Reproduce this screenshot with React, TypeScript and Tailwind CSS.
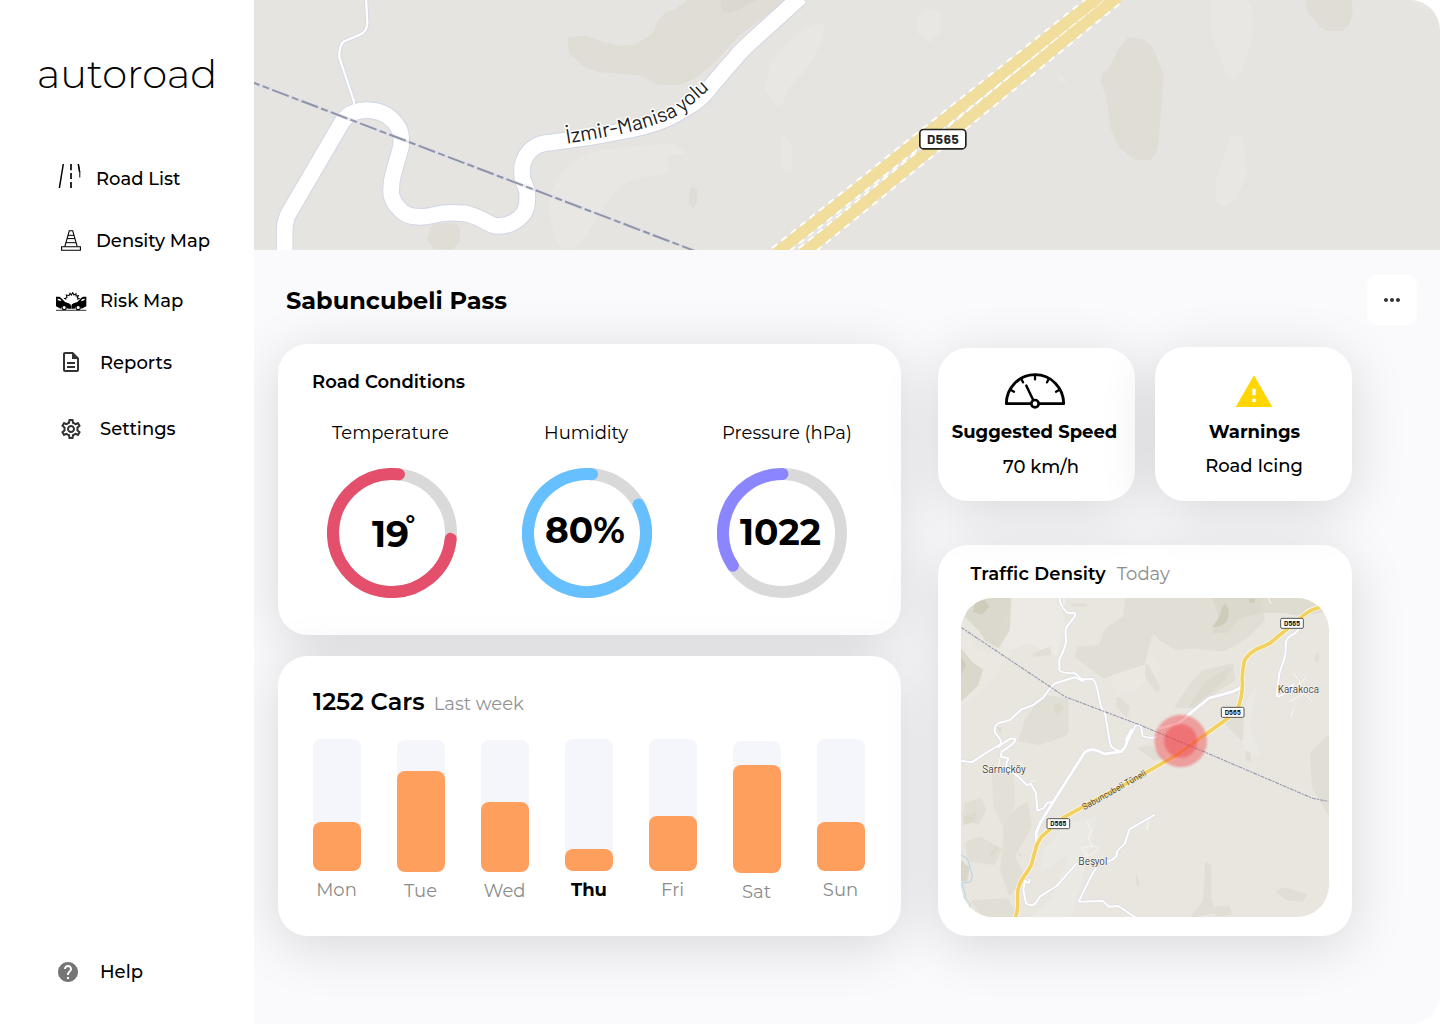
import React from 'react';
import { MdHelp, MdMoreHoriz, MdOutlineDescription, MdOutlineSettings, MdWarning } from 'react-icons/md';

const CARD = 'bg-white rounded-[30px] shadow-[0_10px_56px_rgba(0,0,0,0.14)]';

function RoadIcon() {
  return (
    <svg width="24" height="26" viewBox="0 0 24 26" fill="none" stroke="#000" strokeWidth="1.5">
      <path d="M6.300 1L2.400 25" />
      <path d="M14 1v6.200M14 10v6M14 19v6" stroke="#222" strokeWidth="1.900" />
      <path d="M21.300 1l1.500 8V14.500" strokeWidth="1" />
      <path d="M21.300 1l1.300 8" strokeWidth="1.500" />
    </svg>
  );
}

function ConeIcon() {
  return (
    <svg width="20" height="21" viewBox="0 0 20 21" fill="none" stroke="#000" strokeWidth="1.1">
      <path d="M.6 16.700h18.800v3.500H.6z" />
      <path d="M3.800 16.600L8.300.8h3.400l4.500 15.800" />
      <path d="M7 5.300h6M6.200 8.600h7.600M5 12.700h10" strokeWidth="1" />
    </svg>
  );
}

function CrashIcon() {
  return (
    <svg width="31" height="19" viewBox="0 0 93 57" fill="#000">
      <path d="M0 14L10 14.500Q15 16 19 22L27 30L38 34Q45 36 45 42V50H35A11 11 0 0 0 14 50L0 43Z" />
      <path d="M91 14L81 14.500Q76 16 72 22L64 30L53 34Q46 36 46 42V50H56A11 11 0 0 1 77 50L91 43Z" />
      <path d="M4 20L12 21L17 28L6 25Z" fill="#fff" />
      <path d="M87 20L79 21L74 28L85 25Z" fill="#fff" />
      <circle cx="24.500" cy="46.500" r="6.500" fill="#fff" stroke="#000" strokeWidth="3.500" />
      <circle cx="66.500" cy="46.500" r="6.500" fill="#fff" stroke="#000" strokeWidth="3.500" />
      <path d="M0 53.500h91v2.400H0z" />
      <path
        d="M31 22L26 19L33 17L31 9L39 11L42 4L46 9L50 2L54 9L60 5L60 12L67 11L64 17L69 20L63 22"
        fill="none"
        stroke="#000"
        strokeWidth="3.200"
      />
    </svg>
  );
}

function Logo() {
  return <div className="mt-[49px] pl-[37px] text-[40px] font-light leading-[49px]">autoroad</div>;
}

function NavItem({ icon, label, className, labelClass }: { icon: React.ReactNode; label: string; className: string; labelClass: string }) {
  return (
    <a className={`flex h-[22px] items-center pl-14 text-lg font-medium leading-[22px] ${className}`}>
      <span className="flex w-[31px] shrink-0 items-center">{icon}</span>
      <span className={labelClass}>{label}</span>
    </a>
  );
}

function Sidebar() {
  return (
    <aside className="z-10 flex h-full w-[254px] shrink-0 flex-col bg-white">
      <Logo />
      <nav className="flex flex-col">
        <NavItem className="mt-[70px]" labelClass="ml-[9px]" label="Road List" icon={<span className="-mt-1.5 ml-px"><RoadIcon /></span>} />
        <NavItem className="mt-10" labelClass="ml-[9px]" label="Density Map" icon={<span className="-mt-0.5 ml-[5px]"><ConeIcon /></span>} />
        <NavItem className="mt-[38px]" labelClass="ml-[13px]" label="Risk Map" icon={<CrashIcon />} />
        <NavItem className="mt-10" labelClass="ml-[13px]" label="Reports" icon={<MdOutlineDescription className="-mt-0.5 ml-[3px]" size={24} color="#333" />} />
        <NavItem className="mt-11" labelClass="ml-[13px]" label="Settings" icon={<MdOutlineSettings className="ml-[3px]" size={24} color="#333" />} />
      </nav>
      <NavItem className="mb-[41px] mt-auto" labelClass="ml-[13px]" label="Help" icon={<MdHelp size={24} color="#757575" />} />
    </aside>
  );
}

function HeroMap() {
  const road =
    'M92 756V685Q94 655 110 630L265 365Q280 345 300 337Q325 328 348 331Q375 332 400 347Q422 362 434 385Q444 402 441 440L420 515Q409 550 412 585Q420 612 435 625Q455 650 490 650Q515 652 540 645Q580 635 630 640Q650 643 680 657L715 675Q745 683 775 668Q800 655 812 635Q823 610 819 575Q817 562 806 540Q802 515 806 492Q815 460 840 442Q855 430 895 427L1010 411L1130 389Q1220 370 1270 340L1318 311Q1350 290 1378 250L1460 155Q1490 125 1538 83L1640-10';
  return (
    <svg className="block h-[250px] w-full rounded-tr-[30px]" viewBox="0 0 3558 750" preserveAspectRatio="none">
      <rect width="3558" height="750" fill="#e5e4e0" />
      <g fill="#e0ddd6">
        <path d="M940 112L960 108H995L1060 128L1105 138L1145 133L1198 98L1210 65L1235 35L1265 27L1300 0H1600L1458 105L1380 190L1325 235L1278 254H1215L1150 226L1030 216L990 202L945 160Z" />
        <path d="M527 685L545 670H605L618 685V725L595 748H540L520 720Z" />
        <path d="M1308 565L1318 560L1330 567V605L1318 625L1303 610Z" />
        <g transform="translate(2358)">
          <path d="M265 112L310 118L340 145L371 225L358 400Q353 450 345 465L330 480H285L235 440L213 388L198 288L183 250L187 220L208 203L235 148Z" />
          <path d="M797 0H935L938 45L928 75L905 93H862L840 80L803 35Z" />
        </g>
      </g>
      <path d="M1400 0L1405 35L1420 39L1450 30L1508 0Z" fill="#dbd8d0" />
      <g fill="#e8e7e3">
        <path d="M885 600Q900 540 930 510Q980 460 1040 450L1260 429L1298 460L1238 470L1245 520L1200 527Q1130 535 1100 560Q1040 620 1020 670Q980 740 950 748Q920 750 910 735Q885 660 885 600Z" />
        <g transform="translate(1158)">
          <path d="M555 75L520 73L480 93L440 130L390 190L375 270L410 320L430 310Q440 270 455 255L500 210L545 130Z" />
          <path d="M830 50L860 25L900 35L902 95L865 130L832 100Z" />
          <path d="M432 403L458 440L455 505L440 517L425 500L422 440Z" />
        </g>
        <g transform="translate(2358)">
          <path d="M513 0H620L632 15L638 50L634 130L608 210L585 240L568 235L550 200L513 100Z" />
          <path d="M573 407L600 405L613 440L623 520L588 600L550 620L528 605V540Z" />
          <path d="M53 215L63 245L88 255Z" />
          <path d="M1110 0L1155 28H1200V0Z" />
        </g>
      </g>
      <g fill="none" strokeLinejoin="round">
        <path d="M336-5L340 70Q338 95 318 104L270 124Q255 135 256 172L300 305V335" stroke="#d3d5e6" strokeWidth="12" />
        <path d={road} stroke="#d3d5e6" strokeWidth="53" />
        <path d="M336-5L340 70Q338 95 318 104L270 124Q255 135 256 172L300 305V335" stroke="#fff" strokeWidth="7" />
        <path d={road} stroke="#fff" strokeWidth="47" />
        <path d="M-36 235L1328 755" stroke="#dcdeea" strokeWidth="10" opacity="0.6" />
        <path d="M-36 235L1328 755" stroke="#9094a8" strokeWidth="6" strokeDasharray="53 10 21 10" strokeDashoffset="-3" />
        <g stroke="#fff" strokeWidth="45" strokeDasharray="20 16">
          <path d="M1566 760L2536-10" />
          <path d="M1647 760L2592-10" />
        </g>
        <g stroke="#f1dd9c" strokeWidth="34">
          <path d="M1566 760L2536-10" />
          <path d="M1647 760L2592-10" />
        </g>
      </g>
      <path id="izmir" d="M938 431Q1020 418 1100 402Q1190 382 1256 354Q1285 340 1300 326L1440 200" fill="none" />
      <text className="font-['DIN_Pro',Barlow,Roboto,sans-serif]" fontSize="62" fill="#222" stroke="#fff" strokeWidth="9" paintOrder="stroke" strokeLinejoin="round" textLength="470" lengthAdjust="spacingAndGlyphs">
        <textPath href="#izmir">İzmir-Manisa yolu</textPath>
      </text>
      <rect x="1997.500" y="388.500" width="138" height="58" rx="11" fill="#fff" stroke="#222" strokeWidth="5" />
      <text x="2066.500" y="431" textAnchor="middle" className="font-['DIN_Pro',Barlow,Roboto,sans-serif] font-bold" fontSize="40" fill="#222" textLength="95">
        D565
      </text>
    </svg>
  );
}

function RouteBadge({ x, y }: { x: number; y: number }) {
  return (
    <g transform={`translate(${x} ${y})`}>
      <rect x="-34" y="-15" width="68" height="30" rx="4" fill="#fff" stroke="#555" strokeWidth="3" />
      <text y="7.500" textAnchor="middle" className="font-['DIN_Pro',Barlow,Roboto,sans-serif] font-bold" fontSize="21" fill="#222" textLength="48">
        D565
      </text>
    </g>
  );
}

const SMALL_ROADS = [
  'M388 170Q390 200 412 218L432 219Q440 222 430 235L409 262Q404 280 409 300Q404 330 388 358V390Q392 400 435 400L455 418L488 417Q498 425 505 462L513 500L525 520L532 560L540 610Q545 630 572 634',
  'M460 424L435 412L380 428Q365 435 340 472L310 495L275 508L240 540L205 550Q192 556 195 577L212 600V612L170 638L125 667L93 662',
  'M205 622Q240 590 255 597Q262 605 215 635L213 650L235 655L228 675L245 695L265 710L290 735L303 732L318 760L322 812L340 805L352 788L370 785',
  'M590 610Q600 590 615 560Q622 550 633 560L638 588Q650 595 680 592',
  'M1108 265L1095 280Q1072 290 1068 305L1066 345L1048 400L1040 465Q1042 475 1060 462L1090 435',
  'M673 825L650 838L598 868L585 910L560 935Q565 955 530 965',
  'M440 970L405 1010L380 1038L330 1070L315 1092Q300 1100 288 1090L280 1050L285 1022Q300 1035 298 1020',
  'M500 980L480 1015L446 1085L518 1083L537 1100L565 1098L620 1135',
];
const WIDE_ROADS = [
  'M320 905L318 880L330 850L370 785L462 640Q475 625 500 631L525 642L573 635Q592 620 590 597L605 570',
  'M690 565L745 550Q765 538 780 520L838 474L890 460Q925 450 935 440',
];
const YELLOW_ROAD =
  'M1170 202Q1140 207 1110 235L1020 310Q1000 320 985 325Q958 338 943 362Q936 395 937 420Q940 470 920 512L880 545L740 645L600 725L460 800L400 833L335 890Q320 910 316 930L304 975Q295 992 280 1012Q264 1035 263 1060V1100Q262 1120 255 1134';

function DensityMap() {
  return (
    <svg className="block h-[319px] w-[368px] rounded-[32px]" viewBox="93 174 1104 957">
      <filter id="soft">
        <feGaussianBlur stdDeviation="3" />
      </filter>
      <rect x="93" y="174" width="1104" height="957" fill="#e8e6df" />
      <g fill="#edeae5">
        <path d="M240 174H390L405 260L380 350L300 310L240 330L200 300Z" />
        <path d="M93 260L150 330L180 340L220 300L240 340L180 430L93 500Z" opacity="0.6" />
        <path d="M950 480L980 440L960 560L990 640L950 660L935 600Z" opacity="0.7" />
        <path d="M330 1000L420 940L360 1080L300 1131H420L450 1050L500 830L410 850L340 930Z" opacity="0.7" />
        <path d="M520 350L640 320L700 380L620 450L560 470Z" opacity="0.5" />
      </g>
      <g fill="#e1ded6" stroke="#e1ded6" strokeWidth="10" strokeLinejoin="round">
        <path d="M590 174H720L715 230L660 290L640 370L560 395L520 410L480 380L440 350L445 325L510 320L530 270L585 230Z" />
        <path d="M665 265L700 240L720 174H990L1000 240L950 290L880 330L790 320L740 325L690 295Z" />
        <path d="M340 470L410 480V580L330 610L270 600L290 540Z" />
        <path d="M650 375L685 440L680 450L650 410Z" />
        <path d="M565 475L595 500L590 525L565 500Z" />
        <path d="M820 395L905 375L910 420L860 450L800 500L740 500L780 440Z" />
        <path d="M110 790L150 780L165 810L140 850L100 830Z" />
        <path d="M190 680L245 700L250 790L225 860L195 800Z" opacity="0.7" />
        <path d="M225 860L250 820L290 790L300 860L250 950L280 1010L240 1060L215 990L225 900Z" />
        <path d="M110 910L150 895L210 930L190 970L120 960Z" />
        <path d="M130 1085L230 1080L260 1131H160Z" />
        <path d="M1145 640L1197 590V820L1150 740Z" />
        <path d="M1045 1055L1065 1047L1125 1065L1115 1080L1070 1076Z" />
        <path d="M830 970L840 980V1080L850 1115L790 1128L825 1080ZM858 1104L895 1104L900 1120L860 1124Z" />
        <path d="M885 545L935 535V595L910 570Z" />
      </g>
      <g fill="#e1ded6">
        <path d="M620 1000l10 35-8 8-5-20zM945 630l18 10v25l-15-5zM1155 340h12v25h-12zM425 190h45v10h-45zM620 625l40-10 50 40-40 5zM310 340l50-20 5 25-60 5z" />
      </g>
      <g fill="#d8d6c8" stroke="#d8d6c8" strokeWidth="8" strokeLinejoin="round">
        <path d="M120 176H240L235 270L205 320L170 300L150 270L110 230Z" opacity="0.8" />
        <path d="M93 330L125 370L155 390L140 435L93 480Z" opacity="0.85" />
        <path d="M850 174H1190V210L1120 225L1060 215L1000 215L930 230L890 275L850 275L870 230Z" opacity="0.6" />
        <path d="M780 500L830 425L900 385L880 420L820 470Z" opacity="0.55" />
        <path d="M93 965L115 985L108 1020H93Z" />
      </g>
      <path d="M370 495l20-5 12 15-25 20zM180 945l20-30 5 10-20 25zM100 830l40-15-5 30-35 10zM265 945l8-5v12zM200 560l15 5-5 15z" fill="#d9d8ca" opacity="0.8" />
      <g fill="#cbc9b5" opacity="0.8">
        <path d="M885 190Q905 215 890 245Q875 260 845 262Q870 235 875 205Z" />
        <path d="M135 185L165 180L178 200L155 225L130 215ZM955 176h20v12h-15zM93 350l15 25-15 30z" />
      </g>
      <path d="M1090 400L1110 425L1105 445L1148 485M1100 440L1128 412M1078 485L1115 465L1128 450M1090 505L1083 532M1095 430L1075 440M1015 174l8 18M402 174v20M262 665l18 12M300 724l18-2M210 655l-5 22" fill="none" stroke="#f7f6f3" strokeWidth="3" />
      <path d="M470 845L485 870L475 895L490 920L455 922L470 948L490 940L508 922L480 916M655 840l-3 28M645 860l12 8" fill="none" stroke="#f7f6f3" strokeWidth="3" />
      <path d="M93 945L112 955L127 1005L122 1025L95 1030L105 1060V1075L120 1090L118 1105" fill="none" stroke="#acd3e6" strokeWidth="3" />
      <g fill="none" strokeLinejoin="round" strokeLinecap="round">
        {SMALL_ROADS.map((d) => (
          <path key={d} d={d} stroke="#d6d8e6" strokeWidth="9" />
        ))}
        {WIDE_ROADS.map((d) => (
          <path key={d} d={d} stroke="#d6d8e6" strokeWidth="11.500" />
        ))}
        {SMALL_ROADS.map((d) => (
          <path key={d} d={d} stroke="#fff" strokeWidth="6" />
        ))}
        {WIDE_ROADS.map((d) => (
          <path key={d} d={d} stroke="#fff" strokeWidth="8.500" />
        ))}
        <path d={YELLOW_ROAD} stroke="#fff" strokeWidth="15" strokeLinecap="butt" />
        <path d={YELLOW_ROAD} stroke="#f2d15e" strokeWidth="11.500" strokeLinecap="butt" />
      </g>
      <path d="M93 262L405 470L630 555L845 645L1148 775L1195 784" fill="none" stroke="#9397ad" strokeWidth="3.300" strokeDasharray="12 3 6 3" />
      <circle cx="752" cy="603" r="79" fill="#f24b50" opacity="0.45" filter="url(#soft)" />
      <circle cx="752" cy="603" r="50" fill="#f2393f" opacity="0.42" filter="url(#soft)" />
      <g className="font-['DIN_Pro',Barlow,Roboto,sans-serif]" fill="#333" stroke="#ffffff" strokeOpacity="0.7" strokeWidth="4" paintOrder="stroke" strokeLinejoin="round" fontSize="32">
        <text x="1043" y="458" textLength="124" lengthAdjust="spacingAndGlyphs">Karakoca</text>
        <text x="157" y="699" textLength="130" lengthAdjust="spacingAndGlyphs">Sarnıçköy</text>
        <text x="445" y="974" textLength="87" lengthAdjust="spacingAndGlyphs">Beşyol</text>
        <text transform="translate(463 811) rotate(-29.500)" fontSize="27" strokeOpacity="0.3" strokeWidth="2" textLength="216" lengthAdjust="spacingAndGlyphs">
          Sabuncubeli Tüneli
        </text>
      </g>
      <RouteBadge x={1086} y={250} />
      <RouteBadge x={908} y={517} />
      <RouteBadge x={385} y={851} />
    </svg>
  );
}

type GaugeProps = { label: string; labelClass: string; value: React.ReactNode; valueClass: string; color: string; from: number; to: number };

function Gauge({ label, labelClass, value, valueClass, color, from, to }: GaugeProps) {
  return (
    <div className="w-[130px]">
      <div className={`whitespace-nowrap text-lg leading-[22px] ${labelClass}`}>{label}</div>
      <div className="relative mt-6 h-[130px]">
        <svg className="block" width="130" height="130" viewBox="0 0 130 130" fill="none" strokeWidth="12">
          <circle cx="65" cy="65" r="59" stroke="#d9d9d9" />
          <circle cx="65" cy="65" r="59" stroke={color} strokeLinecap="round" pathLength="360" strokeDasharray={`${to - from} 360`} transform={`rotate(${from - 90} 65 65)`} />
        </svg>
        <div className={`absolute whitespace-nowrap text-4xl font-bold leading-[44px] ${valueClass}`}>{value}</div>
      </div>
    </div>
  );
}

function RoadConditions() {
  return (
    <section className={`h-[291px] pt-[27px] ${CARD}`}>
      <h2 className="pl-[34px] text-lg font-semibold leading-[22px]">Road Conditions</h2>
      <div className="mt-[29px] flex gap-[65px] pl-[49px]">
        <Gauge
          label="Temperature"
          labelClass="ml-[5px]"
          value={<>19<span className="absolute -right-[6px] -top-[3px] text-[22px] font-extrabold leading-[29px]">°</span></>}
          valueClass="left-[45px] top-11"
          color="#e4506b"
          from={95.7}
          to={366.8}
        />
        <Gauge label="Humidity" labelClass="ml-[22px]" value="80%" valueClass="left-[23px] top-10" color="#66c0ff" from={61} to={364.9} />
        <Gauge label="Pressure (hPa)" labelClass="ml-[5px]" value="1022" valueClass="left-[23px] top-[42px]" color="#8b85ff" from={236.4} to={360.5} />
      </div>
    </section>
  );
}

const DAYS = [
  { day: 'Mon', fill: 49, offset: 0 },
  { day: 'Tue', fill: 101, offset: 1 },
  { day: 'Wed', fill: 70, offset: 1 },
  { day: 'Thu', fill: 22, offset: 0, active: true },
  { day: 'Fri', fill: 55, offset: 0 },
  { day: 'Sat', fill: 108, offset: 2 },
  { day: 'Sun', fill: 49, offset: 0 },
];

function Cars() {
  return (
    <section className={`mt-[21px] h-[280px] pl-[35px] pt-[31px] ${CARD}`}>
      <div className="flex items-baseline leading-[29px]">
        <h2 className="text-2xl font-semibold leading-[29px]">1252 Cars</h2>
        <span className="ml-[9px] text-lg leading-[22px] text-[#929292]">Last week</span>
      </div>
      <div className="mt-[23px] flex gap-9">
        {DAYS.map((d) => (
          <div key={d.day} className="flex w-12 flex-col items-center" style={{ paddingTop: d.offset }}>
            <div className="flex h-[132px] w-full items-end rounded-lg bg-[#f5f6fc]">
              <div className="w-full rounded-lg bg-[#ff9f5e]" style={{ height: d.fill }} />
            </div>
            <span className={d.active ? 'mt-2 text-lg font-bold leading-[22px]' : 'mr-px mt-2 text-lg leading-[22px] text-[#8c8c8c]'}>{d.day}</span>
          </div>
        ))}
      </div>
    </section>
  );
}

function SpeedIcon() {
  return (
    <svg width="62" height="36" viewBox="252 128 186 108" fill="none" stroke="#000">
      <path d="M259 220A86 87 0 0 1 431 220Z" strokeWidth="8.500" strokeLinejoin="round" />
      <path d="M345 134v13M304 146l5 10M386 146l-5 10M273 179l9 5M417 179l-9 5" strokeWidth="7" strokeLinecap="round" />
      <path d="M319 166L341 212" strokeWidth="7.500" strokeLinecap="round" />
      <circle cx="345" cy="220" r="11" fill="#fff" strokeWidth="8" />
    </svg>
  );
}

export default function App() {
  return (
    <div className="h-[1024px] w-[1440px] overflow-hidden bg-white font-['Montserrat','Inter',sans-serif] text-black">
      <div className="flex h-full overflow-hidden rounded-r-[30px] bg-[#fafafc]">
        <Sidebar />
        <main className="flex w-[1186px] flex-col">
          <HeroMap />
          <header className="flex items-start justify-between pl-8 pr-[23px] pt-[25px]">
            <h1 className="mt-[11px] text-2xl font-bold leading-[29px]">Sabuncubeli Pass</h1>
            <button className="relative flex size-[50px] items-center justify-center rounded-[10px] bg-white">
              <MdMoreHoriz size={24} color="#333" />
            </button>
          </header>
          <div className="mt-[19px] flex gap-[37px] pl-6">
            <div className="w-[623px]">
              <RoadConditions />
              <Cars />
            </div>
            <div className="w-[414px] pt-[3px]">
              <div className="flex items-end justify-between">
                <section className={`flex h-[153px] w-[197px] flex-col items-center pt-[25px] ${CARD}`}>
                  <span className="-ml-[3px]"><SpeedIcon /></span>
                  <h3 className="-ml-1 mt-3 whitespace-nowrap text-lg font-bold leading-[22px]">Suggested Speed</h3>
                  <p className="ml-[9px] mt-[13px] text-lg font-medium leading-[22px]">70 km/h</p>
                </section>
                <section className={`flex h-[154px] w-[197px] flex-col items-center pt-[25px] ${CARD}`}>
                  <MdWarning className="ml-px" size={40} color="#ffd600" />
                  <h3 className="ml-0.5 mt-[9px] text-lg font-bold leading-[22px]">Warnings</h3>
                  <p className="ml-px mt-3 text-lg font-medium leading-[22px]">Road Icing</p>
                </section>
              </div>
              <section className={`mt-11 h-[391px] px-[23px] pt-[18px] ${CARD}`}>
                <div className="mb-[13px] flex pl-[9.500px] text-lg leading-[22px]">
                  <h2 className="font-semibold tracking-[0.18px] [font-variant-ligatures:none]">Traffic Density</h2>
                  <span className="ml-[11px] text-[#8c8c8c]">Today</span>
                </div>
                <DensityMap />
              </section>
            </div>
          </div>
        </main>
      </div>
    </div>
  );
}
